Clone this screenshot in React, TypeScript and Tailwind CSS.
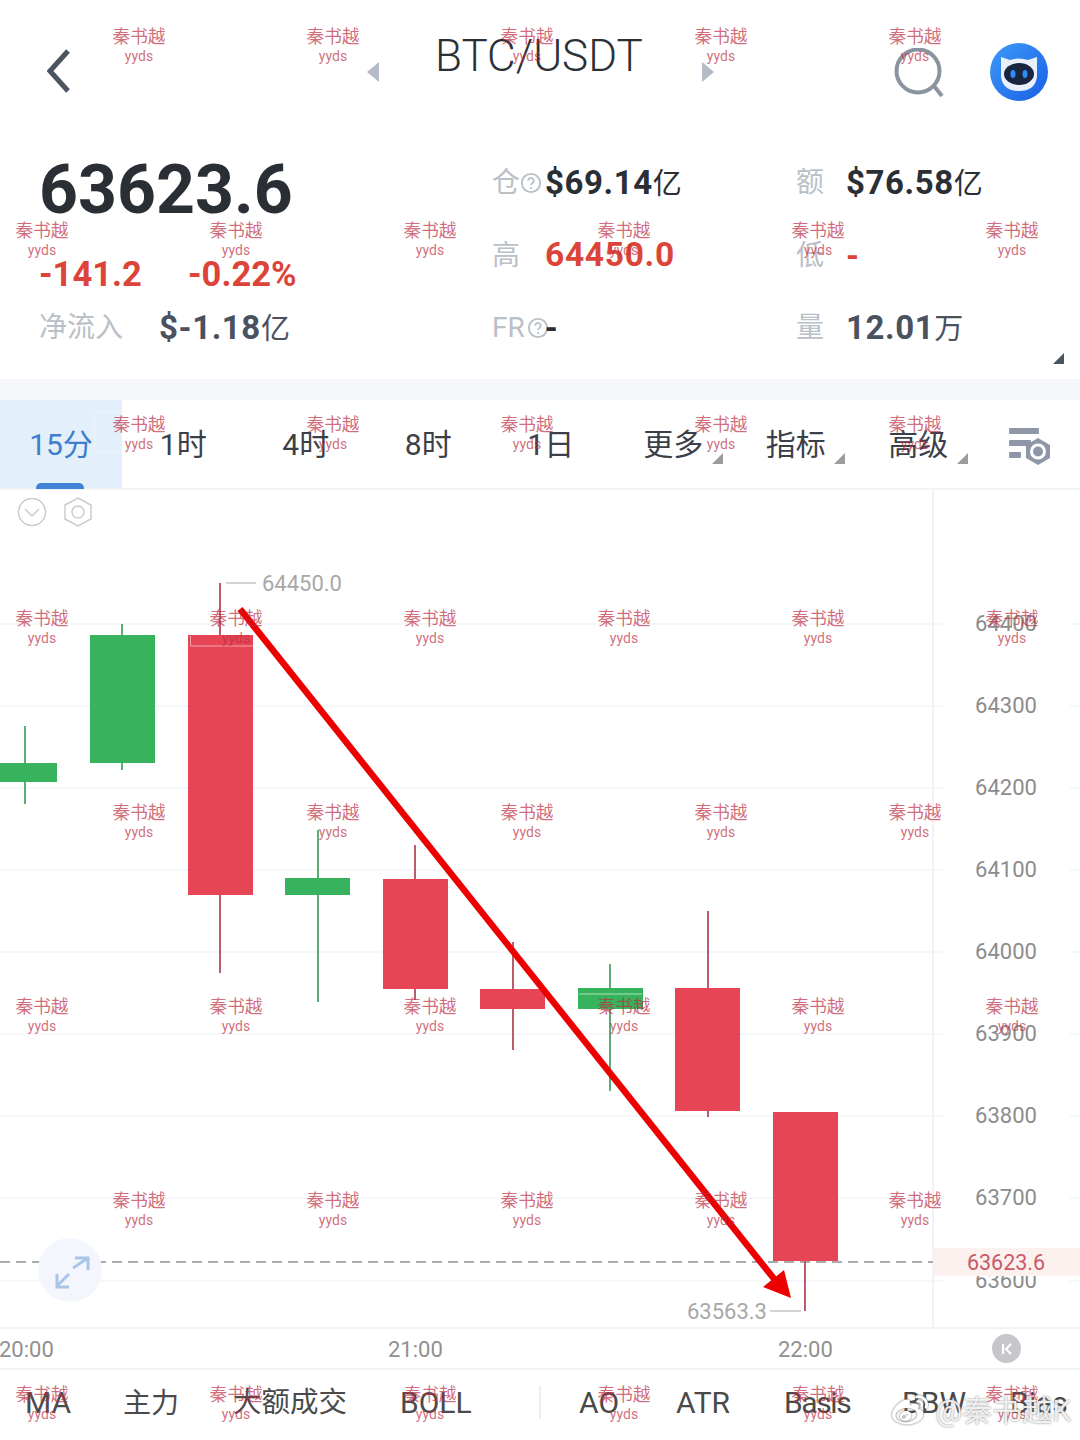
import { FaWeibo } from "react-icons/fa";

const RED = "#e64556";
const GREEN = "#36b35c";

const candles = [
  { x: -8, w: 65, top: 763, bottom: 782, hi: 726, lo: 804, up: true, c: 25 },
  { x: 90, w: 65, top: 635, bottom: 763, hi: 624, lo: 770, up: true, c: 122 },
  { x: 188, w: 65, top: 635, bottom: 895, hi: 583, lo: 973, up: false, c: 220 },
  { x: 285, w: 65, top: 878, bottom: 895, hi: 830, lo: 1002, up: true, c: 318 },
  { x: 383, w: 65, top: 879, bottom: 989, hi: 845, lo: 1000, up: false, c: 415 },
  { x: 480, w: 65, top: 989, bottom: 1009, hi: 942, lo: 1050, up: false, c: 513 },
  { x: 578, w: 65, top: 988, bottom: 1009, hi: 964, lo: 1091, up: true, c: 610 },
  { x: 675, w: 65, top: 988, bottom: 1111, hi: 911, lo: 1117, up: false, c: 708 },
  { x: 773, w: 65, top: 1112, bottom: 1261, hi: 1261, lo: 1311, up: false, c: 805 },
];

const axis = [
  { y: 624, v: "64400" },
  { y: 706, v: "64300" },
  { y: 788, v: "64200" },
  { y: 870, v: "64100" },
  { y: 952, v: "64000" },
  { y: 1034, v: "63900" },
  { y: 1116, v: "63800" },
  { y: 1198, v: "63700" },
  { y: 1281, v: "63600" },
];

const rowsA = [26, 414, 802, 1190];
const rowsB = [220, 608, 996, 1384];
const colsA = [139, 333, 527, 721, 915];
const colsB = [42, 236, 430, 624, 818, 1012];

const marks = [
  ...rowsA.flatMap((y) => colsA.map((x) => ({ x, y }))),
  ...rowsB.flatMap((y) => colsB.map((x) => ({ x, y }))),
];

function Corner({ className }: { className: string }) {
  return (
    <svg viewBox="0 0 10 10" className={className}>
      <polygon points="10,0 10,10 0,10" fill="currentColor" />
    </svg>
  );
}

function Tab({ label, corner }: { label: string; corner?: boolean }) {
  return (
    <div className="relative flex h-full w-[122.5px] shrink-0 items-center justify-center pt-[1px] text-[30px] text-[#3b4048]">
      <span>{label}</span>
      {corner && <Corner className="absolute bottom-[24px] right-[12px] h-[11px] w-[11px] text-[#9c9c9c]" />}
    </div>
  );
}

function Help() {
  return (
    <svg viewBox="0 0 24 24" className="h-[22px] w-[22px] shrink-0">
      <circle cx="12" cy="12" r="10" fill="none" stroke="#b9c0c7" strokeWidth="2" />
      <path d="M9 9.5a3 3 0 1 1 4.6 2.5c-1 .7-1.6 1.2-1.6 2.5" fill="none" stroke="#b9c0c7" strokeWidth="2" />
      <circle cx="12" cy="17.5" r="1.2" fill="#b9c0c7" />
    </svg>
  );
}

function Value({ main, unit, color }: { main: string; unit?: string; color: string }) {
  return (
    <span className="flex items-baseline font-bold" style={{ color }}>
      <span className="text-[33px] tracking-[0.6px]">{main}</span>
      {unit && <span className="text-[29px] font-normal">{unit}</span>}
    </span>
  );
}

export default function App() {
  return (
    <div className="relative h-[1440px] w-[1080px] overflow-hidden bg-white font-['Roboto','Noto_Sans_CJK_SC',sans-serif]">
      {/* top bar */}
      <header className="flex h-[125px] items-center pb-[15px]">
        <svg viewBox="0 0 24 44" className="ml-[47px] mt-[32px] h-[44px] w-[24px]">
          <polyline points="21,2 3,22 21,42" fill="none" stroke="#4a5560" strokeWidth="5" />
        </svg>
        <svg viewBox="0 0 12 20" className="ml-[296px] mt-[34px] h-[20px] w-[12px]">
          <polygon points="12,0 12,20 0,10" fill="#b4bdc7" />
        </svg>
        <h1 className="ml-[56px] mt-[2px] w-[206px] whitespace-nowrap text-center text-[44px] font-light leading-none text-[#2c3138]">
          BTC/USDT
        </h1>
        <svg viewBox="0 0 12 20" className="ml-[61px] mt-[34px] h-[20px] w-[12px]">
          <polygon points="0,0 12,10 0,20" fill="#b4bdc7" />
        </svg>
        <svg viewBox="0 0 50 50" className="ml-[180px] mt-[36px] h-[50px] w-[50px]">
          <circle cx="24" cy="23" r="21.5" fill="none" stroke="#8a949e" strokeWidth="4" />
          <line x1="40" y1="38" x2="48" y2="48" stroke="#8a949e" strokeWidth="4" />
        </svg>
        <svg viewBox="0 0 58 58" className="ml-[46px] mt-[34px] h-[58px] w-[58px]">
          <defs>
            <linearGradient id="av" x1="0" y1="0" x2="1" y2="1">
              <stop offset="0" stopColor="#3d9bf7" />
              <stop offset="1" stopColor="#1a5fe6" />
            </linearGradient>
          </defs>
          <circle cx="29" cy="29" r="29" fill="url(#av)" />
          <path d="M11 14 L20 17 Q29 14 38 17 L47 14 L47 34 Q45 48 29 48 Q13 48 11 34 Z" fill="#e8f0fb" />
          <ellipse cx="29" cy="31" rx="15" ry="11" fill="#1a2540" />
          <ellipse cx="23" cy="31" rx="2.5" ry="4" fill="#2f8bf5" />
          <ellipse cx="35" cy="31" rx="2.5" ry="4" fill="#2f8bf5" />
        </svg>
      </header>

      {/* stats */}
      <section className="flex h-[254px] pl-[39px] pt-[22px]">
        <div className="flex w-[453px] flex-col">
          <div className="flex h-[86px] items-center text-[68px] font-bold leading-none text-[#2a2e35]">63623.6</div>
          <div className="mt-[20px] flex h-[44px] items-center text-[34.5px] font-bold text-[#dc4439]">
            <span className="w-[149px]">-141.2</span>
            <span>-0.22%</span>
          </div>
          <div className="mt-[9px] flex h-[44px] items-center">
            <span className="w-[120px] text-[28px] text-[#b9c0c7]">净流入</span>
            <Value main="$-1.18" unit="亿" color="#4a5260" />
          </div>
        </div>
        <div className="flex w-[304px] flex-col">
          <div className="flex h-[72px] items-center">
            <span className="text-[28px] text-[#b9c0c7]">仓</span>
            <Help />
            <span className="ml-[3px]">
              <Value main="$69.14" unit="亿" color="#2a2e35" />
            </span>
          </div>
          <div className="flex h-[73px] items-center">
            <span className="w-[53px] text-[28px] text-[#b9c0c7]">高</span>
            <span className="text-[33.5px] font-bold tracking-[0.7px] text-[#dc4439]">64450.0</span>
          </div>
          <div className="flex h-[72px] items-center">
            <span className="text-[28px] text-[#b9c0c7]">FR</span>
            <span className="ml-[2px]">
              <Help />
            </span>
            <span className="-ml-[4px]">
              <Value main="-" color="#2a2e35" />
            </span>
          </div>
        </div>
        <div className="relative flex flex-1 flex-col">
          <div className="flex h-[72px] items-center">
            <span className="w-[50px] text-[28px] text-[#b9c0c7]">额</span>
            <Value main="$76.58" unit="亿" color="#2a2e35" />
          </div>
          <div className="flex h-[73px] items-center">
            <span className="w-[50px] text-[28px] text-[#b9c0c7]">低</span>
            <Value main="-" color="#dc4439" />
          </div>
          <div className="flex h-[72px] items-center">
            <span className="w-[50px] text-[28px] text-[#b9c0c7]">量</span>
            <Value main="12.01" unit="万" color="#4a5260" />
          </div>
          <Corner className="absolute bottom-[15px] right-[16px] h-[11px] w-[11px] text-[#4a5560]" />
        </div>
      </section>

      <div className="h-[21px] bg-[#f5f7fa]" />

      {/* period tabs */}
      <nav className="relative flex h-[90px] items-center border-b-2 border-[#f2f3f5]">
        <div className="relative flex h-full w-[122px] shrink-0 items-center justify-center bg-[#e3effb] pt-[1px] text-[30px] text-[#3d7dcb]">
          <span>15分</span>
          <div className="absolute -bottom-[1px] left-[36px] h-[6px] w-[48px] rounded-t-[5px] bg-[#3f82d6]" />
          <div className="absolute left-[94px] top-[12px] h-[40px] w-[28px] border border-[#edf3fa]" />
        </div>
        <Tab label="1时" />
        <Tab label="4时" />
        <Tab label="8时" />
        <Tab label="1日" />
        <Tab label="更多" corner />
        <Tab label="指标" corner />
        <Tab label="高级" corner />
        <svg viewBox="0 0 44 40" className="ml-[28px] mt-[4px] h-[40px] w-[44px]">
          <rect x="1" y="2" width="30" height="6" rx="1" fill="#8d97a8" />
          <rect x="1" y="14" width="22" height="6" rx="1" fill="#8d97a8" />
          <rect x="1" y="26" width="12" height="6" rx="1" fill="#8d97a8" />
          <polygon points="30,12 42,19 42,32 30,39 18,32 18,19" fill="#8d97a8" />
          <circle cx="30" cy="25.5" r="6.5" fill="none" stroke="#fff" strokeWidth="3" />
        </svg>
      </nav>

      {/* chart */}
      <div className="h-[839px]">
        <svg viewBox="0 490 1080 839" className="block h-[839px] w-[1080px]">
          {axis.map((a) => (
            <g key={a.y}>
              <line x1="0" x2="943" y1={a.y} y2={a.y} stroke="#f3f5f7" strokeWidth="1.5" />
              <line x1="1070" x2="1080" y1={a.y} y2={a.y} stroke="#f3f5f7" strokeWidth="1.5" />
              <text x="1006" y={a.y + 7} textAnchor="middle" fontSize="22" fill="#8c8c8c">
                {a.v}
              </text>
            </g>
          ))}
          <line x1="933" x2="933" y1="490" y2="1329" stroke="#f2f2f4" strokeWidth="2" />
          <line x1="0" x2="1080" y1="1328" y2="1328" stroke="#f2f2f4" strokeWidth="2" />

          <circle cx="32" cy="512" r="13.5" fill="none" stroke="#c9cccf" strokeWidth="1.5" />
          <polyline points="25,509 32,516 39,509" fill="none" stroke="#c9cccf" strokeWidth="1.5" />
          <polygon points="78,498 91,505 91,519 78,526 65,519 65,505" fill="none" stroke="#c9cccf" strokeWidth="1.5" />
          <circle cx="78" cy="512" r="6" fill="none" stroke="#c9cccf" strokeWidth="1.5" />

          <rect x="933" y="1248" width="147" height="28" fill="#fdf1f0" />
          <text x="1006" y="1270" textAnchor="middle" fontSize="21.5" fill="#c95a68">
            63623.6
          </text>

          <line x1="0" x2="933" y1="1262" y2="1262" stroke="#ababab" strokeWidth="2" strokeDasharray="10 6" />

          {candles.map((k) => {
            const color = k.up ? GREEN : RED;
            const wick = k.up ? "#5aae72" : "#bb5b6b";
            return (
              <g key={k.c}>
                <line x1={k.c} x2={k.c} y1={k.hi} y2={k.lo} stroke={wick} strokeWidth="2" />
                <rect x={k.x} y={k.top} width={k.w} height={k.bottom - k.top} fill={color} />
              </g>
            );
          })}
          <path d="M190.5 646V636M190.5 646H270" fill="none" stroke="#fff" strokeOpacity="0.5" />
          <path d="M579 994H642" fill="none" stroke="#fff" strokeOpacity="0.6" />

          <line x1="226" x2="256" y1="583" y2="583" stroke="#c4c4c4" strokeWidth="1.5" />
          <text x="262" y="591" fontSize="22" fill="#a8a8a8">
            64450.0
          </text>
          <line x1="770" x2="801" y1="1311" y2="1311" stroke="#c4c4c4" strokeWidth="1.5" />
          <text x="687" y="1319" fontSize="22" fill="#a8a8a8">
            63563.3
          </text>

          <line x1="240" y1="609" x2="775" y2="1280" stroke="#ec0000" strokeWidth="6.5" />
          <polygon points="791,1298 763,1287 784,1270" fill="#ec0000" />

          <circle cx="70" cy="1270" r="32" fill="#f3f7fd" />
          <g fill="none" stroke="#a9c5e8" strokeWidth="3">
            <path d="M73 1268 L88 1258 M75 1258 H88 V1270" />
            <path d="M56 1287 L69 1274 M57 1274 V1287 H69" />
          </g>
        </svg>
      </div>

      {/* time axis */}
      <div className="flex h-[39px] items-center pt-[2px] text-[22px] text-[#909090]">
        <span className="-ml-[1px] w-[55px]">20:00</span>
        <span className="ml-[334px] w-[54px]">21:00</span>
        <span className="ml-[336px] w-[54px]">22:00</span>
        <span className="ml-[160px] -mt-[2px] flex h-[29px] w-[29px] items-center justify-center rounded-full bg-[#c5c7cb]">
          <svg viewBox="0 0 14 14" className="h-[14px] w-[14px]">
            <path d="M3 2V12M11 2L6 7L11 12" fill="none" stroke="#fff" strokeWidth="2.2" />
          </svg>
        </span>
      </div>

      {/* indicators */}
      <div className="flex h-[72px] items-center whitespace-nowrap border-t-2 border-[#f2f3f5] pb-[6px] text-[30px] text-[#4a4a4a]">
        <span className="ml-[25px] w-[45px]">MA</span>
        <span className="ml-[53px] mt-[3px] w-[56px] text-[28px]">主力</span>
        <span className="ml-[54px] mt-[3px] w-[114px] text-[28.5px]">大额成交</span>
        <span className="ml-[53px] w-[71px]">BOLL</span>
        <span className="ml-[68px] h-[33px] w-[2px] bg-[#eeeeee]" />
        <span className="ml-[38px] w-[41px]">AO</span>
        <span className="ml-[56px] w-[54px]">ATR</span>
        <span className="ml-[54px] w-[65px] tracking-[-1.4px]">Basis</span>
        <span className="ml-[53px] w-[64px]">BBW</span>
        <span className="ml-[44px] w-[61px]">Bias</span>
      </div>

      {/* watermarks */}
      {marks.map((m) => (
        <div
          key={`${m.x}-${m.y}`}
          className="pointer-events-none absolute flex w-[100px] flex-col items-center text-[#bd2c42]/70"
          style={{ left: m.x - 50, top: m.y }}
        >
          <span className="h-[21px] text-[17.7px] leading-[22px]">秦书越</span>
          <span className="h-[18px] text-[14px] leading-[18px]">yyds</span>
        </div>
      ))}

      {/* weibo mark */}
      <div className="pointer-events-none absolute bottom-[11px] right-[9px] flex items-center gap-[5px] text-[30px] leading-none text-white/85 [text-shadow:0_0_2px_#777]">
        <FaWeibo className="h-[36px] w-[40px] text-white drop-shadow-[0_0_1px_#666]" />
        <span>@秦书越K</span>
      </div>
    </div>
  );
}
